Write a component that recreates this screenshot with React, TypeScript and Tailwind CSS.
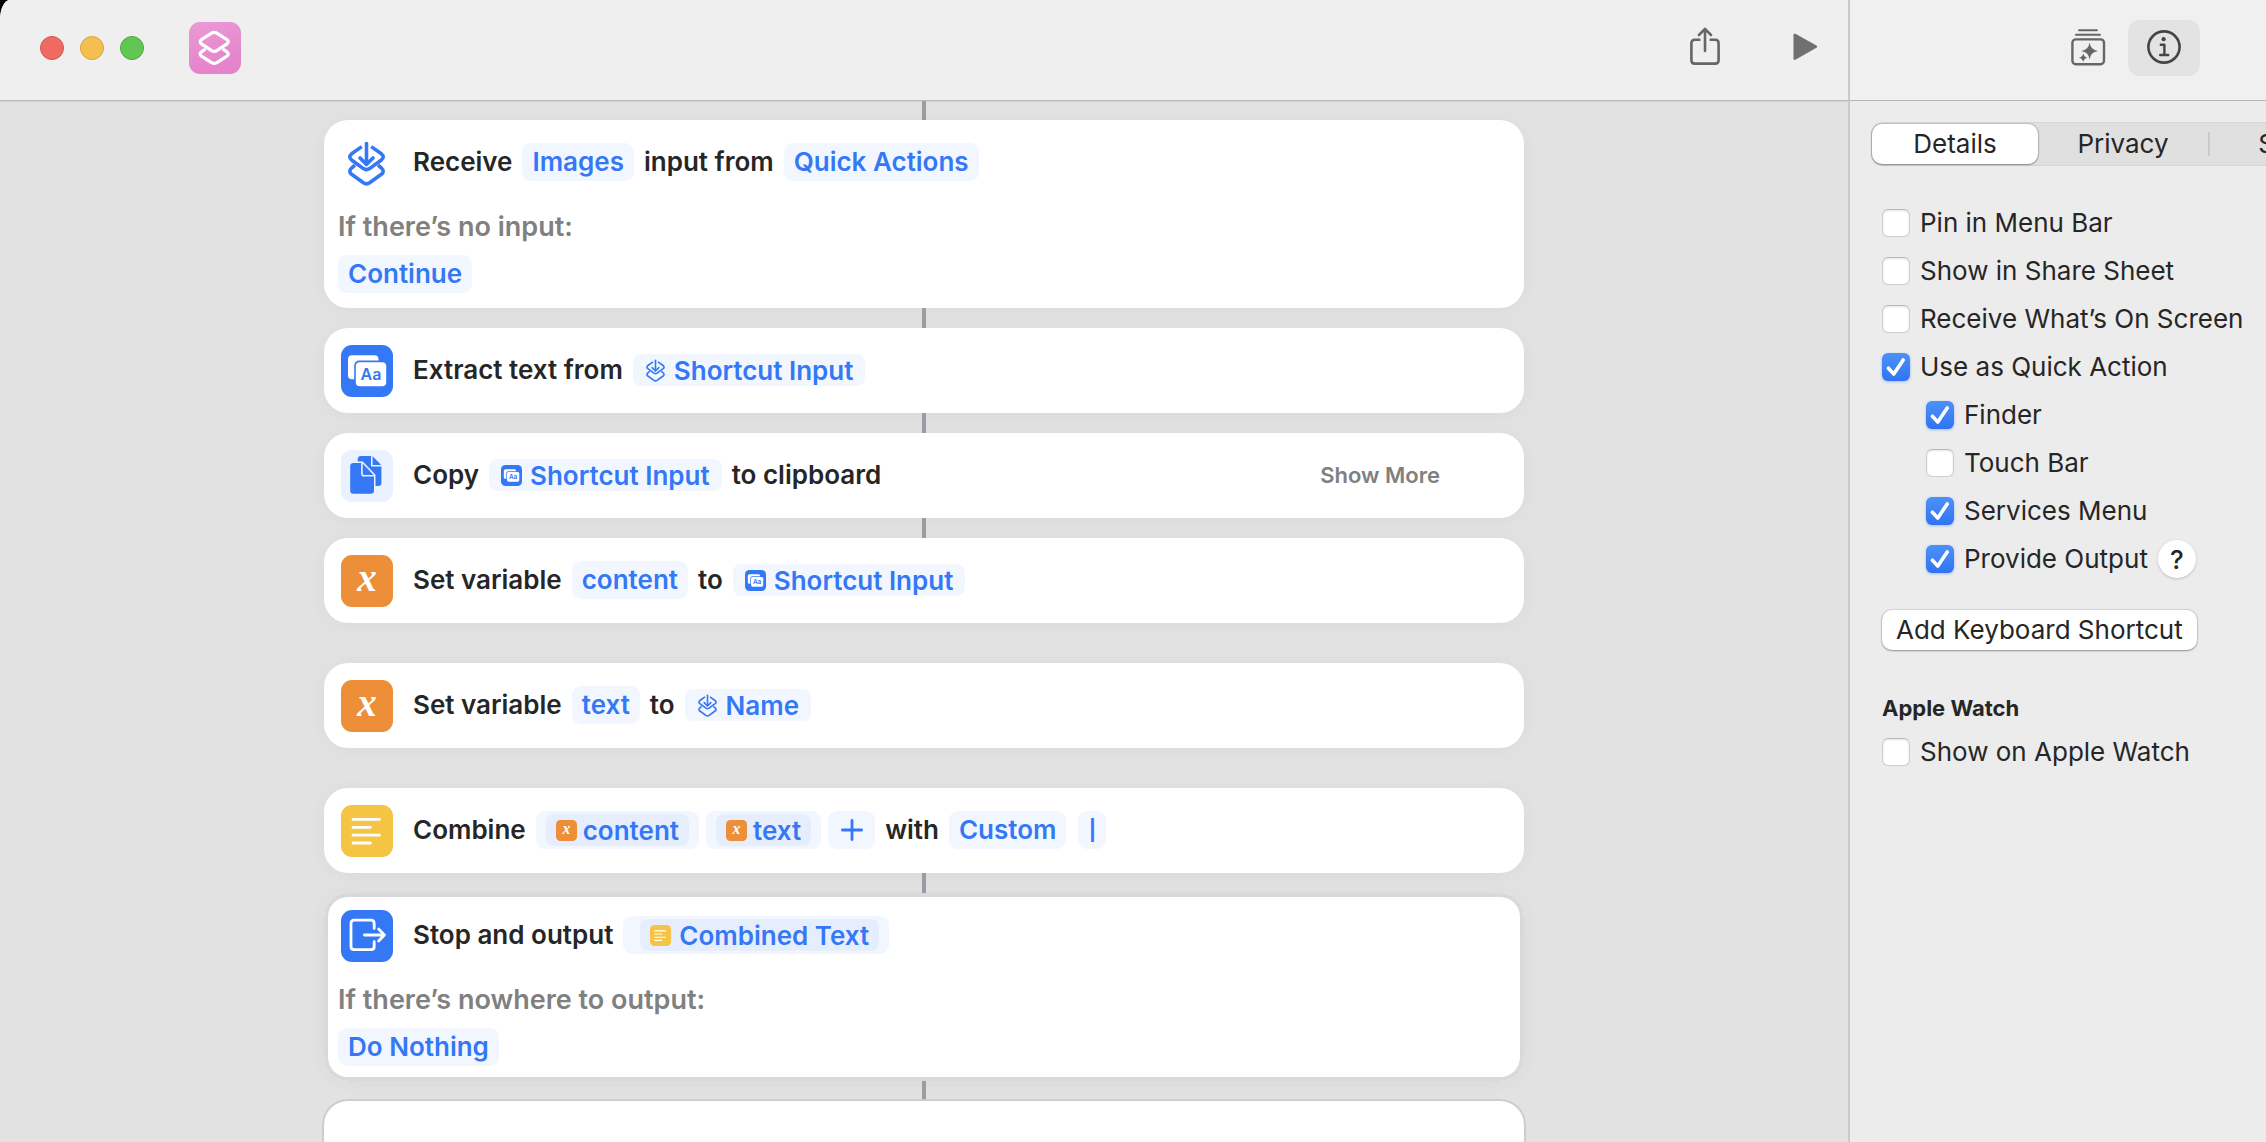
import React, { useState } from "react";

type IconProps = { className?: string };

function ShortcutInputPaths() {
  return (
    <>
      <path strokeLinecap="butt" d="M20.8 9.6 L10.6 16.8 Q7 19.9 10.6 23 L22.4 31.6 Q25.5 33.6 28.6 31.6 L40.4 23 Q44 19.9 40.4 16.8 L30.2 9.6" />
      <path strokeLinecap="butt" d="M14 28.2 L10.6 31 Q7 34.2 10.6 37.3 L22.4 45.8 Q25.5 47.8 28.6 45.8 L40.4 37.3 Q44 34.2 40.4 31 L37 28.2" />
      <path d="M25.5 6.5 V26.5" />
      <path d="M19 21 L25.5 27.4 L32 21" />
    </>
  );
}

function ShortcutInputGlyph() {
  return (
    <svg viewBox="0 0 52 52" className="size-[52px] shrink-0" fill="none" stroke="#3478f6" strokeWidth="3.6" strokeLinecap="round" strokeLinejoin="round" aria-hidden="true">
      <ShortcutInputPaths />
    </svg>
  );
}

function SmallShortcutInputGlyph() {
  return (
    <svg viewBox="5 4 41 45" className="h-[23px] w-[21px] shrink-0" fill="none" stroke="#3478f6" strokeWidth="3.2" strokeLinecap="round" strokeLinejoin="round" aria-hidden="true">
      <ShortcutInputPaths />
    </svg>
  );
}

function ExtractTextIcon({ className = "size-[52px]" }: IconProps) {
  return (
    <svg viewBox="0 0 52 52" className={`${className} shrink-0`} aria-hidden="true">
      <rect width="52" height="52" rx="11" fill="#3478f6" />
      <rect x="7" y="10.3" width="30.5" height="24" rx="4" fill="#fff" />
      <rect x="13.2" y="15.6" width="33.6" height="27.2" rx="5" fill="#3478f6" />
      <rect x="14.8" y="17.2" width="30.4" height="24" rx="4" fill="#fff" />
      <text x="30" y="35.2" textAnchor="middle" fontSize="16" fontWeight="600" fill="#3478f6" className="font-[Inter,sans-serif]">Aa</text>
    </svg>
  );
}

function CopyIcon() {
  return (
    <svg viewBox="0 0 52 52" className="size-[52px] shrink-0" aria-hidden="true">
      <rect width="52" height="52" rx="11" fill="#eaf1ff" />
      <path fill="#3478f6" d="M20 6 H31.4 L40.4 15.2 V32.8 Q40.4 36 37.2 36 H20 Q16.8 36 16.8 32.8 V9.2 Q16.8 6 20 6 Z" />
      <path fill="none" stroke="#eaf1ff" strokeWidth="1.6" d="M30.8 5 V15.8 H41" />
      <path fill="#3478f6" stroke="#eaf1ff" strokeWidth="3" paintOrder="stroke" d="M12.6 13 H21.2 L33 25.4 V40.6 Q33 43.8 29.8 43.8 H12.4 Q9.2 43.8 9.2 40.6 V16.2 Q9.2 13 12.6 13 Z" />
      <path fill="none" stroke="#eaf1ff" strokeWidth="1.6" d="M20.9 12 V23.4 Q20.9 25.8 23.2 25.8 H34" />
    </svg>
  );
}

function VariableIcon({ className = "size-[52px]" }: IconProps) {
  return (
    <svg viewBox="0 0 52 52" className={`${className} shrink-0`} aria-hidden="true">
      <rect width="52" height="52" rx="11" fill="#ec8f38" />
      <text x="26" y="35.6" textAnchor="middle" fontSize="39" fontWeight="700" fontStyle="italic" fill="#fff" className="font-[Liberation_Serif,serif]">x</text>
    </svg>
  );
}

function TextIcon({ className = "size-[52px]" }: IconProps) {
  return (
    <svg viewBox="0 0 52 52" className={`${className} shrink-0`} aria-hidden="true">
      <rect width="52" height="52" rx="11" fill="#f6c445" />
      <path fill="none" stroke="#fff" strokeWidth="2.8" strokeLinecap="round" d="M12 14.4 H38.4 M12 22.3 H29.4 M12 30.2 H38.4 M12 38 H29.4" />
    </svg>
  );
}

function StopIcon() {
  return (
    <svg viewBox="0 0 52 52" className="size-[52px] shrink-0" aria-hidden="true">
      <rect width="52" height="52" rx="11" fill="#3478f6" />
      <g fill="none" stroke="#fff" strokeWidth="2.8" strokeLinecap="round" strokeLinejoin="round">
        <path d="M33.2 18.4 V13.4 Q33.2 10.2 30 10.2 H13.2 Q10 10.2 10 13.4 V36.4 Q10 39.6 13.2 39.6 H30 Q33.2 39.6 33.2 36.4 V31.6" />
        <path d="M23.4 25 H43 M37.6 19 L43.4 25 L37.6 31" />
      </g>
    </svg>
  );
}

function Label({ children }: { children: React.ReactNode }) {
  return <span className="pb-0.5">{children}</span>;
}

function Pill({ children, className = "px-2.5 pb-0.5" }: { children: React.ReactNode; className?: string }) {
  return (
    <button type="button" className={`flex h-[38px] items-center rounded-[9px] bg-[#f2f7ff] text-[#3478f6] ${className}`}>
      {children}
    </button>
  );
}

function Token({ icon, children }: { icon: React.ReactNode; children: React.ReactNode }) {
  return (
    <button type="button" className="flex h-8 items-center gap-2 rounded-lg bg-[#f2f7ff] px-3 text-[#3478f6]">
      {icon}
      {children}
    </button>
  );
}

function NestedToken({ icon, children, className = "px-2.5", gap = "gap-1.5" }: { icon: React.ReactNode; children: React.ReactNode; className?: string; gap?: string }) {
  return (
    <Pill className={className}>
      <span className={`flex h-8 items-center rounded-lg bg-[#e6eefe] px-2.5 ${gap}`}>
        {icon}
        {children}
      </span>
    </Pill>
  );
}

const cardBase = "w-full rounded-3xl bg-white px-3.5 pt-[17px]";
const softShadow = "shadow-[0_2px_20px_rgba(0,0,0,0.04)]";

function ActionRow({ icon, children }: { icon: React.ReactNode; children: React.ReactNode }) {
  return (
    <div className="flex gap-5 pl-[3px]">
      {icon}
      <div className="flex h-[50px] flex-1 items-center gap-2.5">{children}</div>
    </div>
  );
}

function Card({ children, className = "pb-4" }: { children: React.ReactNode; className?: string }) {
  return <section className={`${cardBase} ${softShadow} ${className}`}>{children}</section>;
}

function Fallback({ label, value }: { label: string; value: string }) {
  return (
    <div className="mt-[22px] flex flex-col items-start gap-3">
      <p className="text-[27px] leading-8 font-semibold text-[#808080]">{label}</p>
      <Pill>{value}</Pill>
    </div>
  );
}

function Connector({ className = "h-5" }: { className?: string }) {
  return <div className={`w-1 shrink-0 bg-[#9c9ca4] ${className}`} />;
}

function CheckRow({ label, initial = false, nested = false, children }: { label: string; initial?: boolean; nested?: boolean; children?: React.ReactNode }) {
  const [on, setOn] = useState(initial);
  return (
    <div className={`flex h-12 items-center gap-2.5 ${nested ? "pl-11" : ""}`}>
      <label className="flex items-center gap-2.5 whitespace-nowrap">
        <span className="relative flex size-7">
          <input
            type="checkbox"
            checked={on}
            onChange={(e) => setOn(e.target.checked)}
            className="size-7 appearance-none rounded-md border border-[#cdcdcd] border-t-[#b9b9b9] bg-white shadow-[inset_0_1px_2px_rgba(0,0,0,0.12)] checked:border-0 checked:bg-linear-to-b checked:from-[#4c91f8] checked:to-[#3173f5] checked:shadow-[0_1px_3px_rgba(49,115,245,0.4)]"
          />
          {on && (
            <svg viewBox="0 0 28 28" className="pointer-events-none absolute inset-0" fill="none" stroke="#fff" strokeWidth="3.6" strokeLinecap="round" strokeLinejoin="round" aria-hidden="true">
              <path d="M6.4 15.2 L11.8 21 L21.2 7" />
            </svg>
          )}
        </span>
        <Label>{label}</Label>
      </label>
      {children}
    </div>
  );
}

export default function App() {
  return (
    <div className="h-screen bg-black font-[Inter,sans-serif] text-[26px] text-[#262626]">
      <div className="flex h-full overflow-hidden rounded-tl-[10px_20px] bg-[#e2e2e2]">
        <div className="flex min-w-0 flex-1 flex-col">
          <header className="flex h-[101px] shrink-0 items-center border-b border-[#b9b9b9] bg-[#efefef] pr-[30px] pb-1 pl-10">
            <div className="flex gap-4">
              <button type="button" aria-label="Close" className="size-6 rounded-full border border-[#d5544a] bg-[#ed6b60]" />
              <button type="button" aria-label="Minimize" className="size-6 rounded-full border border-[#d9a23e] bg-[#f5bf4f]" />
              <button type="button" aria-label="Zoom" className="size-6 rounded-full border border-[#4fa73f] bg-[#62c655]" />
            </div>
            <svg viewBox="0 0 52 52" className="ml-[45px] size-[52px]" aria-label="Shortcuts" role="img">
              <defs>
                <linearGradient id="app-tile" x1="0" y1="0" x2="0.3" y2="1">
                  <stop offset="0" stopColor="#e99ad6" />
                  <stop offset="1" stopColor="#e583cb" />
                </linearGradient>
              </defs>
              <rect width="52" height="52" rx="11" fill="url(#app-tile)" />
              <g fill="none" stroke="#fff" strokeWidth="3.2" strokeLinejoin="round">
                <path d="M22.6 11.2 Q25.2 9.5 27.8 11.2 L37.6 17.4 Q41 19.8 37.6 22.2 L27.8 28.6 Q25.2 30.3 22.6 28.6 L12.8 22.2 Q9.4 19.8 12.8 17.4 Z" />
                <path d="M16.6 27 L12.8 29.6 Q9.4 32 12.8 34.4 L22.6 40.6 Q25.2 42.3 27.8 40.6 L37.6 34.4 Q41 32 37.6 29.6 L33.8 27" />
              </g>
            </svg>
            <div className="ml-auto flex items-center gap-[73px] pb-0.5">
              <button type="button" aria-label="Share">
                <svg viewBox="0 0 30 40" className="h-10 w-[30px]" fill="none" stroke="#666" strokeWidth="2.6" strokeLinecap="round" strokeLinejoin="round">
                  <path strokeLinecap="butt" d="M10.4 12.8 H4.8 Q1.4 12.8 1.4 16.2 V33.2 Q1.4 36.6 4.8 36.6 H25.2 Q28.6 36.6 28.6 33.2 V16.2 Q28.6 12.8 25.2 12.8 H19.6" />
                  <path d="M15 24 V2 M9 8 L15 1.8 L21 8" />
                </svg>
              </button>
              <button type="button" aria-label="Run">
                <svg viewBox="0 0 25 28" className="h-7 w-[25px]" fill="#6f7072">
                  <path d="M0.5 2.2 Q0.5 -0.4 2.9 0.9 L23.4 12.4 Q25.4 13.6 23.4 14.8 L2.9 26.6 Q0.5 27.9 0.5 25.2 Z" />
                </svg>
              </button>
            </div>
          </header>

          <main className="flex min-h-0 flex-1 flex-col items-center overflow-hidden font-semibold shadow-[inset_0_1px_0_#d6d6d6]">
            <div className="flex w-full max-w-[1200px] flex-col items-center">
              <Connector className="h-[19px]" />
              <Card className="pb-[15px]">
                <ActionRow icon={<ShortcutInputGlyph />}>
                  <Label>Receive</Label>
                  <Pill>Images</Pill>
                  <Label>input from</Label>
                  <Pill>Quick Actions</Pill>
                </ActionRow>
                <Fallback label="If there’s no input:" value="Continue" />
              </Card>
              <Connector />
              <Card>
                <ActionRow icon={<ExtractTextIcon />}>
                  <Label>Extract text from</Label>
                  <Token icon={<SmallShortcutInputGlyph />}>Shortcut Input</Token>
                </ActionRow>
              </Card>
              <Connector />
              <Card>
                <ActionRow icon={<CopyIcon />}>
                  <Label>Copy</Label>
                  <Token icon={<ExtractTextIcon className="size-[21px]" />}>Shortcut Input</Token>
                  <Label>to clipboard</Label>
                  <button type="button" className="mr-[70px] ml-auto text-[22px] text-[#808080]">Show More</button>
                </ActionRow>
              </Card>
              <Connector />
              <Card>
                <ActionRow icon={<VariableIcon />}>
                  <Label>Set variable</Label>
                  <Pill>content</Pill>
                  <Label>to</Label>
                  <Token icon={<ExtractTextIcon className="size-[21px]" />}>Shortcut Input</Token>
                </ActionRow>
              </Card>
              <div className="h-10" />
              <Card>
                <ActionRow icon={<VariableIcon />}>
                  <Label>Set variable</Label>
                  <Pill>text</Pill>
                  <Label>to</Label>
                  <Token icon={<SmallShortcutInputGlyph />}>Name</Token>
                </ActionRow>
              </Card>
              <div className="h-10" />
              <Card>
                <ActionRow icon={<TextIcon />}>
                  <Label>Combine</Label>
                  <div className="flex gap-[7px]">
                    <NestedToken icon={<VariableIcon className="size-[21px]" />}>content</NestedToken>
                    <NestedToken icon={<VariableIcon className="size-[21px]" />}>text</NestedToken>
                    <button type="button" aria-label="Add" className="flex h-[38px] w-[47px] items-center justify-center rounded-[9px] bg-[#f2f7ff]">
                      <svg viewBox="0 0 22 22" className="size-[22px]" stroke="#3478f6" strokeWidth="2.8" strokeLinecap="round">
                        <path d="M11 1.4 V20.6 M1.4 11 H20.6" />
                      </svg>
                    </button>
                  </div>
                  <Label>with</Label>
                  <div className="flex gap-3">
                    <Pill>Custom</Pill>
                    <input aria-label="Custom separator" defaultValue="|" className="h-[38px] w-7 rounded-[9px] bg-[#f2f7ff] text-center text-[20px] font-bold text-[#3478f6]" />
                  </div>
                </ActionRow>
              </Card>
              <Connector />
              <section className={`${cardBase} pb-[15px] shadow-[inset_0_0_0_4px_#d9d9d9,0_2px_20px_rgba(0,0,0,0.04)]`}>
                <ActionRow icon={<StopIcon />}>
                  <Label>Stop and output</Label>
                  <NestedToken className="pr-2.5 pl-[17px]" gap="gap-2" icon={<TextIcon className="size-[21px]" />}>Combined Text</NestedToken>
                </ActionRow>
                <Fallback label="If there’s nowhere to output:" value="Do Nothing" />
              </section>
              <Connector />
              <section className="h-[85px] w-full rounded-3xl bg-white ring-2 ring-[#cdcdcd]" />
            </div>
          </main>
        </div>

        <aside className="flex w-[418px] shrink-0 flex-col overflow-hidden border-l-2 border-[#c9c9c9] bg-[#ececec]">
          <header className="flex h-[101px] shrink-0 items-center justify-end gap-[22px] border-b border-[#b3b3b3] bg-[#f0f0f0] pr-[66px] pb-1">
            <button type="button" aria-label="Action library" className="pb-0.5">
              <svg viewBox="0 0 36 38" className="h-[38px] w-9" fill="none" stroke="#666" strokeWidth="2.4" strokeLinecap="round">
                <path d="M9 2.2 H27 M6 6.8 H30" strokeWidth="2" />
                <rect x="2.4" y="11.4" width="31.6" height="24.8" rx="3.4" />
                <path fill="#666" stroke="none" d="M19.6 14.6 Q20.6 22 28 23 Q20.6 24 19.6 31.4 Q18.6 24 11.2 23 Q18.6 22 19.6 14.6 Z" />
                <path fill="#666" stroke="none" d="M13.2 25.2 Q13.9 29 17.6 29.7 Q13.9 30.4 13.2 34.2 Q12.5 30.4 8.8 29.7 Q12.5 29 13.2 25.2 Z" />
              </svg>
            </button>
            <button type="button" aria-label="Shortcut details" className="flex h-14 w-[72px] items-center justify-center rounded-xl bg-[#e3e3e3] pb-0.5">
              <svg viewBox="0 0 36 36" className="size-9" fill="none" stroke="#454545" strokeWidth="2.6" strokeLinecap="round" strokeLinejoin="round">
                <circle cx="18" cy="18" r="15.6" />
                <circle cx="17.6" cy="10.2" r="2.1" fill="#454545" stroke="none" />
                <path strokeWidth="2.4" d="M14.8 15.8 H18.4 V25.8 M14.2 26 H22.2" />
              </svg>
            </button>
          </header>

          <div className="flex-1 pt-[21px] pl-[21px]">
            <div className="flex h-11 w-[508px] items-center rounded-xl border border-[#d6d6d6] bg-[#e0e0e0]" role="tablist">
              <button type="button" role="tab" aria-selected="true" className="h-10 w-[166px] rounded-[10px] bg-white pb-0.5 shadow-[0_0_1px_1px_rgba(0,0,0,0.14),0_1px_2px_rgba(0,0,0,0.3)]">Details</button>
              <button type="button" role="tab" aria-selected="false" className="h-10 w-[170px] pb-0.5">Privacy</button>
              <span className="h-6 w-0.5 bg-[#cbcbcb]" />
              <button type="button" role="tab" aria-selected="false" className="h-10 flex-1 pb-0.5">Setup</button>
            </div>

            <div className="mt-[33px] flex flex-col pl-[11px]">
              <CheckRow label="Pin in Menu Bar" />
              <CheckRow label="Show in Share Sheet" />
              <CheckRow label="Receive What’s On Screen" />
              <CheckRow label="Use as Quick Action" initial />
              <CheckRow label="Finder" initial nested />
              <CheckRow label="Touch Bar" nested />
              <CheckRow label="Services Menu" initial nested />
              <CheckRow label="Provide Output" initial nested>
                <button type="button" aria-label="Help" className="flex size-[38px] items-center justify-center rounded-full bg-white font-medium shadow-[0_1px_3px_rgba(0,0,0,0.2)]">?</button>
              </CheckRow>
              <button type="button" className="mt-[27px] flex h-10 items-center self-start rounded-[10px] bg-white px-3.5 pb-0.5 whitespace-nowrap shadow-[0_0_1px_1px_rgba(0,0,0,0.1),0_1px_2px_rgba(0,0,0,0.3)]">Add Keyboard Shortcut</button>
              <h2 className="mt-11 text-[22px] leading-7 font-bold">Apple Watch</h2>
              <div className="mt-1.5">
                <CheckRow label="Show on Apple Watch" />
              </div>
            </div>
          </div>
        </aside>
      </div>
    </div>
  );
}
